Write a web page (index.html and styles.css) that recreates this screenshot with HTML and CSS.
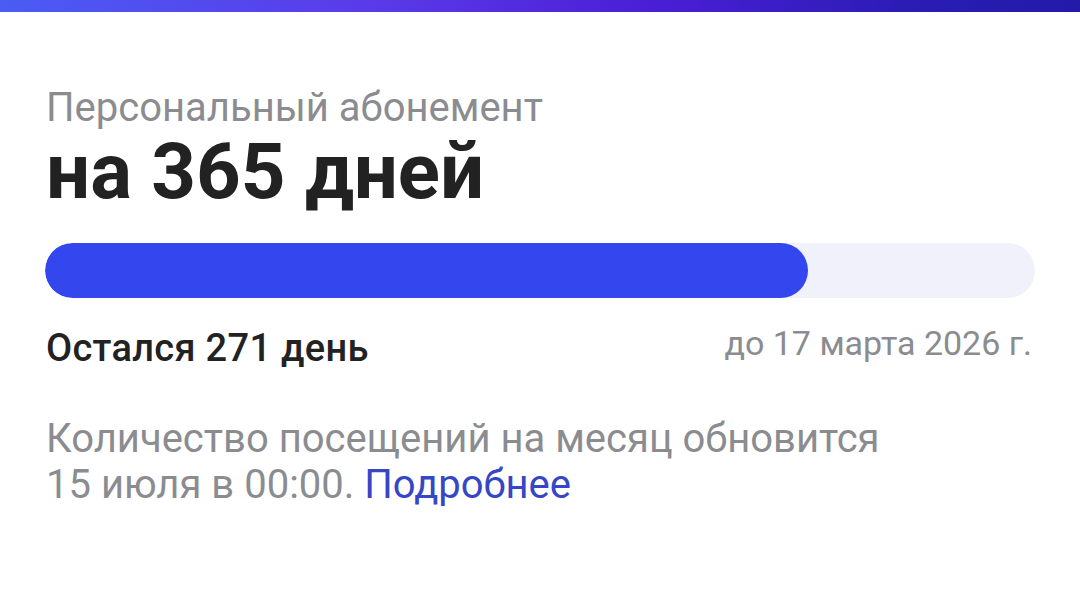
FILE: index.html
```html
<!DOCTYPE html>
<html lang="ru">
<head>
<meta charset="utf-8">
<link rel="stylesheet" href="styles.css">
</head>
<body>
<div class="topbar"></div>
<main class="card">
  <div class="subtitle">Персональный абонемент</div>
  <h1 class="title">на 365 дней</h1>
  <div class="progress"><div class="fill" style="width: 77.1%"></div></div>
  <div class="meta">
    <span class="left">Остался 271 день</span>
    <span class="right">до 17 марта 2026 г.</span>
  </div>
  <p class="note">Количество посещений на месяц обновится<br>15 июля в 00:00. <a class="link" href="#">Подробнее</a></p>
</main>
</body>
</html>
```
FILE: styles.css
```css
html, body {
  margin: 0;
  padding: 0;
  background: #ffffff;
  font-family: Roboto, "Noto Sans", sans-serif;
}
.topbar {
  height: 12px;
  background: linear-gradient(90deg, #4a5cf4 0%, #5a3ae8 35%, #4a1fd6 60%, #2a1cb4 85%, #231aa8 100%);
}
.card {
  padding: 0 46px 0 46px;
}
.subtitle {
  margin-top: 72px;
  font-size: 40px;
  line-height: 48px;
  color: #8b8c90;
  font-weight: 400;
}
.title {
  margin: 0;
  font-size: 78px;
  line-height: 80px;
  font-weight: 700;
  color: #222222;
}
.progress {
  margin-top: 31px;
  margin-left: -1px;
  margin-right: -1px;
  height: 55px;
  border-radius: 28px;
  background: #f0f1fb;
  overflow: hidden;
}
.fill {
  height: 100%;
  border-radius: 28px;
  background: #3447ef;
}
.meta {
  display: flex;
  justify-content: space-between;
  align-items: baseline;
  margin-top: 28px;
}
.left {
  font-size: 38px;
  font-weight: 500;
  letter-spacing: 0.3px;
  color: #222222;
  line-height: 44px;
}
.right {
  font-size: 34px;
  color: #8b8c90;
  position: relative;
  top: -6px;
  margin-right: 2px;
}
.note {
  margin: 46px 0 0 0;
  font-size: 40px;
  line-height: 46px;
  color: #8b8c90;
}
.link {
  color: #3646c6;
  text-decoration: none;
}
```
